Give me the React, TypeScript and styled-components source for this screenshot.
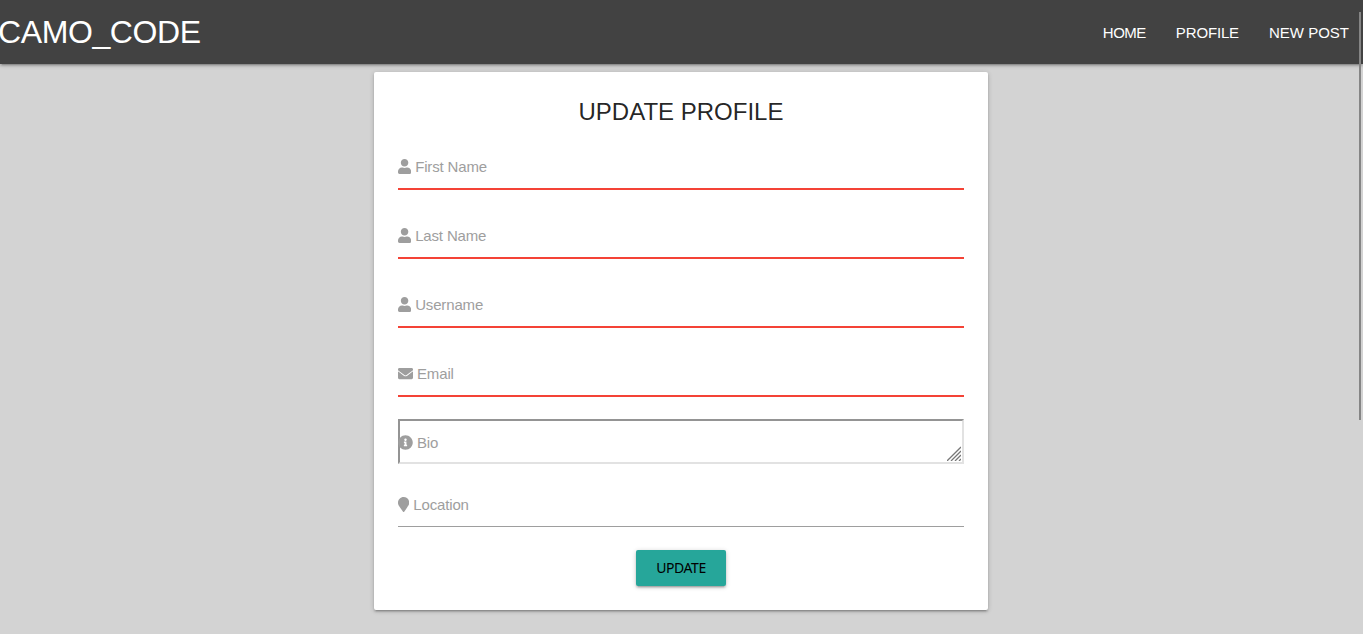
import React from "react";
import styled, { createGlobalStyle } from "styled-components";
import { FaUser, FaEnvelope, FaInfoCircle, FaMapMarker } from "react-icons/fa";

const GlobalStyle = createGlobalStyle`
  *, *::before, *::after { box-sizing: border-box; }
  html, body { margin: 0; height: 100%; overflow: hidden; }
  body {
    background: #d3d3d3;
    color: rgba(0, 0, 0, 0.87);
    font: 15px/1.5 "Liberation Sans", Arial, sans-serif;
  }
`;

const raised = `box-shadow: 0 2px 2px 0 rgba(0,0,0,.14), 0 3px 1px -2px rgba(0,0,0,.12), 0 1px 5px 0 rgba(0,0,0,.2);`;

const Page = styled.div`
  min-height: 634px;
`;

const Nav = styled.nav`
  display: flex;
  justify-content: space-between;
  height: 64px;
  line-height: 64px;
  color: #fff;
  background: #424242;
  ${raised}
`;

const Brand = styled.a`
  font-size: 32px;
  letter-spacing: -0.4px;
  line-height: 65px;
  margin-left: -2px;
`;

const NavLinks = styled.ul`
  display: flex;
  gap: 30px;
  margin: 0;
  padding: 0 14px 0 0;
  list-style: none;
`;

const NavLink = styled.li<{ $tracking?: number }>`
  white-space: nowrap;
  line-height: 65px;
  letter-spacing: ${(p) => p.$tracking ?? 0}px;
`;

const Main = styled.main`
  padding: 8px 1px 0 0;
`;

const Card = styled.form`
  width: 614px;
  height: 538px;
  margin: 0 auto;
  padding: 24px;
  border-radius: 2px;
  background: #fff;
  ${raised}
`;

const Title = styled.h1`
  margin: 0 0 15px;
  font-size: 24px;
  font-weight: 400;
  line-height: 32px;
  text-align: center;
`;

const Field = styled.div<{ $required?: boolean }>`
  height: ${(p) => (p.$required ? 47 : 46)}px;
  margin-bottom: ${(p) => (p.$required ? 22 : 23)}px;
  border-bottom: ${(p) => (p.$required ? "2px solid #f44336" : "1px solid #9e9e9e")};
`;

const Label = styled.label<{ $icon: number }>`
  display: flex;
  align-items: center;
  gap: 4px;
  height: 47px;
  color: #9e9e9e;
  letter-spacing: -0.15px;

  svg { flex: none; width: ${(p) => p.$icon}px; height: 15px; }
  span { padding-top: 2px; }
`;

const BioBox = styled.div`
  position: relative;
  height: 45px;
  margin-bottom: 17px;
  border: 2px solid;
  border-color: #949494 #e2e2e2 #e2e2e2 #949494;

  label { margin-left: -2px; height: 43px; }
`;

const Grip = styled.svg`
  position: absolute;
  right: 1px;
  bottom: 1px;
`;

const Button = styled.button`
  display: block;
  width: 90px;
  height: 36px;
  margin: 0 auto;
  padding: 0 0 1px;
  border: 0;
  border-radius: 2px;
  background: #26a69a;
  color: #000;
  font: 14px/35px "Noto Sans", sans-serif;
  letter-spacing: -0.45px;
  ${raised}
`;

const ScrollThumb = styled.div`
  position: absolute;
  top: 12px;
  right: 2px;
  width: 2px;
  height: 408px;
  background: #858585;
`;

const userFields = ["First Name", "Last Name", "Username"];

export default function App() {
  return (
    <Page>
      <GlobalStyle />
      <Nav>
        <Brand>CAMO_CODE</Brand>
        <NavLinks>
          <NavLink $tracking={-0.5}>HOME</NavLink>
          <NavLink $tracking={-0.15}>PROFILE</NavLink>
          <NavLink>NEW POST</NavLink>
        </NavLinks>
      </Nav>
      <Main>
        <Card>
          <Title>UPDATE PROFILE</Title>
          {userFields.map((name) => (
            <Field key={name} $required>
              <Label $icon={13.125}><FaUser /><span>{name}</span></Label>
            </Field>
          ))}
          <Field $required><Label $icon={15}><FaEnvelope /><span>Email</span></Label></Field>
          <BioBox>
            <Label $icon={15}><FaInfoCircle /><span>Bio</span></Label>
            <Grip width="14" height="15" viewBox="0 0 14 15" stroke="#777" strokeWidth="1.3">
              <path d="M0 15 14 1M4 15 14 5M8 15 14 9M12 15 14 13" />
            </Grip>
          </BioBox>
          <Field><Label $icon={11.25}><FaMapMarker /><span>Location</span></Label></Field>
          <Button type="button">UPDATE</Button>
        </Card>
      </Main>
      <ScrollThumb />
    </Page>
  );
}
